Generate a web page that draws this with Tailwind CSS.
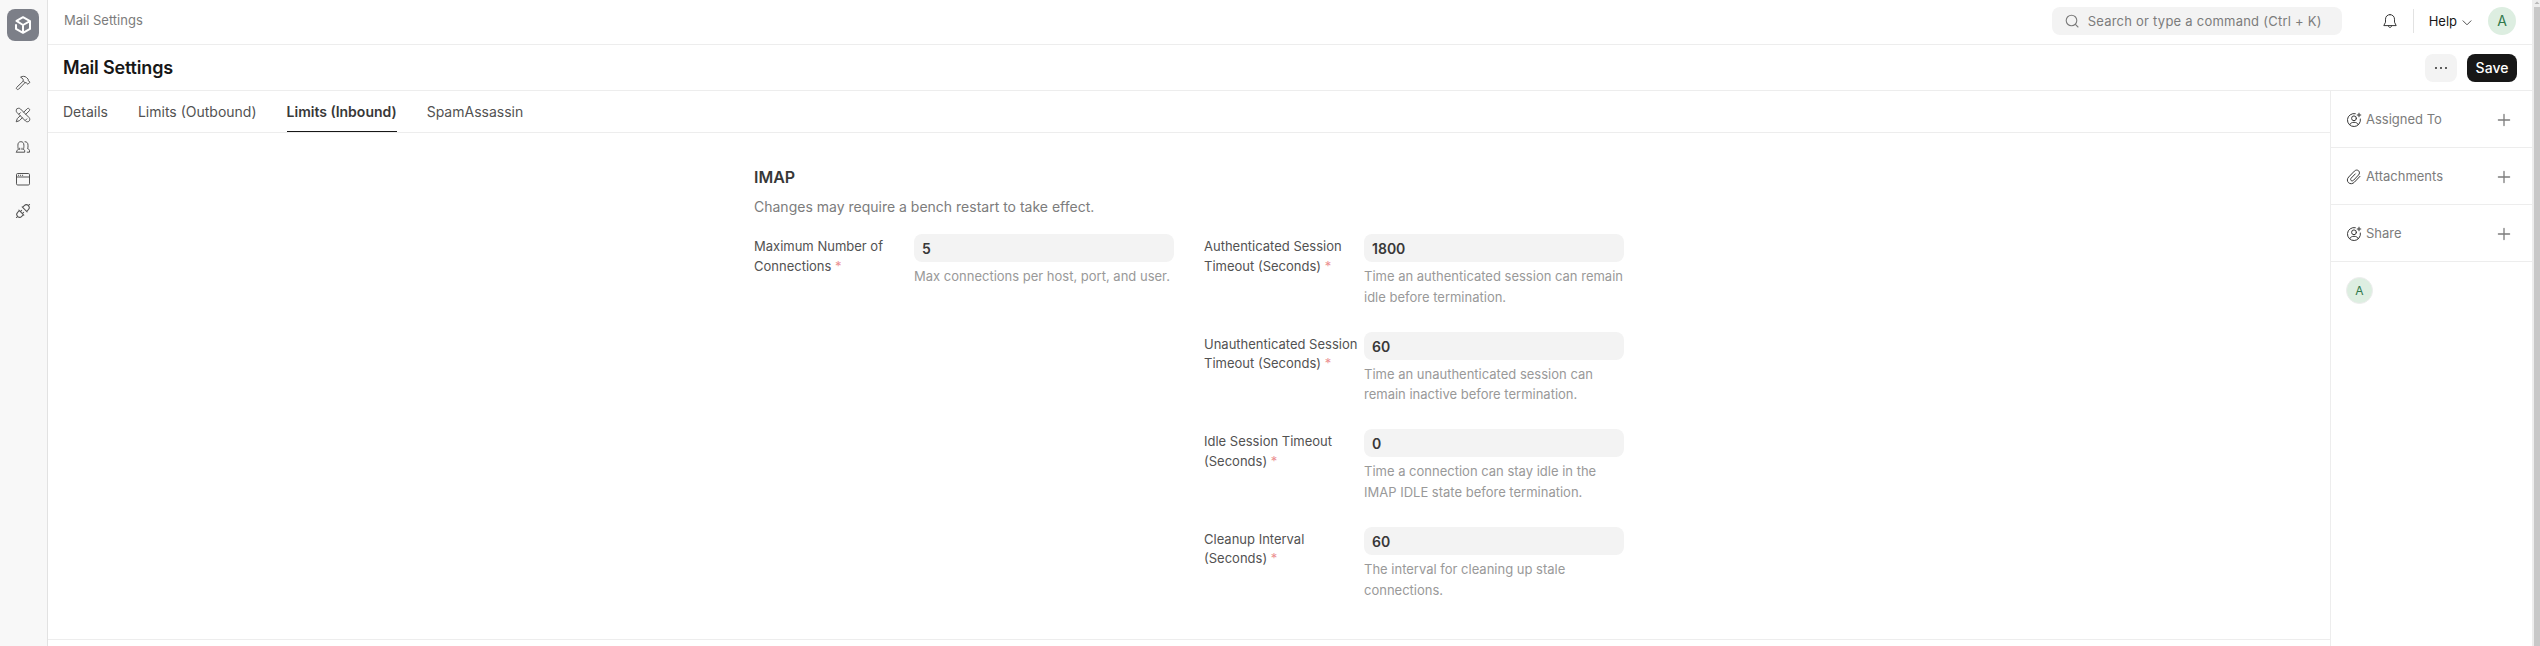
<!DOCTYPE html>
<html lang="en">
<head>
<meta charset="utf-8">
<title>Mail Settings</title>
<script src="https://cdn.jsdelivr.net/npm/@tailwindcss/browser@4"></script>
</head>
<body class="flex h-[646px] w-[2540px] overflow-hidden bg-white font-['Inter',sans-serif] text-[13px] leading-[19.5px] font-[420] text-[#525252]">
<svg class="hidden">
  <symbol id="assign" viewBox="0 0 16 16" fill="none" stroke="currentColor" stroke-linecap="round" stroke-linejoin="round">
    <path d="M9.3 1.65A6.5 6.5 0 1 0 14.4 7M3.6 12.7c.7-1.5 2.4-2.400 4.400-2.400s3.700.9 4.400 2.400M13 1.200v3.600M11.200 3h3.600"/>
    <circle cx="8" cy="6.3" r="2.4"/>
  </symbol>
  <symbol id="plus" viewBox="0 0 16 16" fill="none" stroke="currentColor" stroke-width="1.3" stroke-linecap="round"><path d="M8 2.400v11.200M2.400 8h11.200"/></symbol>
</svg>

<aside class="flex w-12 shrink-0 flex-col items-center border-r border-[#e2e2e2] bg-[#f8f8f8] pt-[9px] pr-px text-[#525252]">
  <div class="flex size-8 items-center justify-center rounded-lg bg-[#7c7f88] text-white">
    <svg class="size-5" viewBox="0 0 20 20" fill="none" stroke="currentColor" stroke-width="2" stroke-linejoin="round"><path d="M3 9.200V13.900l7 3.900 7-3.900V6.100L10 2.200 3.500 5.900l6.500 4.100 7-3.900M10 10v7.800"/></svg>
  </div>
  <nav class="mt-[34px] flex flex-col gap-4">
    <svg class="size-4" viewBox="0 0 16 16" fill="none" stroke="currentColor" stroke-linejoin="round"><path d="M5.600 2.200C7.500 1 9.800 1 11.500 2.500L13.200 4.200V5.600L15 7.200 12.900 9.300 11.200 7.700H10L8.100 5.800V4.300C7.600 3.300 6.700 2.700 5.600 2.200ZM8.300 6 1.800 12.300c-.6.600-.6 1.200 0 1.800s1.300.6 1.900 0L10 7.600"/></svg>
    <svg class="size-4" viewBox="0 0 16 16" fill="none" stroke="currentColor" stroke-linejoin="round" stroke-linecap="round"><path d="M1.900 1.900c.9-.9 2.600-.9 3.500 0l8.700 8.700c.9.900.9 2.600 0 3.500s-2.600.9-3.500 0L1.900 5.400c-.9-.9-.9-2.600 0-3.500ZM8.700 5.200 12.100 1.800c.6-.6 1.500-.6 2.100 0s.6 1.500 0 2.100L10.800 7.300M7.300 10.800 4.400 13.700 1.200 14.800 2.300 11.600 5.200 8.700M4 7.100 5.400 5.700M10.600 13.100l1.200-1.200"/></svg>
    <svg class="size-4" viewBox="0 0 16 16" fill="none" stroke="currentColor" stroke-linejoin="round" stroke-linecap="round"><path d="M1.500 13.200h8.200v-1.500c0-.8-.7-1.100-1.400-1.300.5-1 .6-2.300.6-4.200 0-2.200-1-3.500-3-3.500s-3 1.300-3 3.500c0 1.900.1 3.200.6 4.200-.7.200-1.500.5-1.500 1.300ZM4.700 9.200v1.300M7 9.200v1.300M10 2.700c2 0 3 1.300 3 3.500 0 1.500.1 2.500-.4 3.500.9.300 1.900.8 1.900 1.900v1.600h-2.300"/></svg>
    <svg class="size-4" viewBox="0 0 16 16" fill="none" stroke="currentColor" stroke-linejoin="round"><rect x="1.500" y="2.500" width="13" height="11.500" rx="1.200"/><path d="M1.500 6h13M3 4.300h1.100M5 4.300h1.100M7 4.300h1.100"/></svg>
    <svg class="size-4 overflow-visible" viewBox="0 0 16 16" fill="none" stroke="currentColor" stroke-linejoin="round" stroke-linecap="round"><path transform="rotate(45 8 8)" d="M8 -1.300V.4M4.500 5.700h7M5.100 5.700V3.300a2.900 2.900 0 0 1 5.800 0v2.400M4.500 10.300h7M5.100 10.300v2.400a2.900 2.900 0 0 0 5.800 0v-2.400M6.600 10.300V8.500M9.400 10.300V8.500M8 15.600v1.700"/></svg>
  </nav>
</aside>

<div class="flex min-w-0 flex-1 flex-col">
  <header class="flex h-[45px] shrink-0 items-center border-b border-[#ededed] pr-4 pl-4">
    <span class="-mt-[3px] text-[#7c7c7c]">Mail Settings</span>
    <div class="-mt-0.5 ml-auto flex h-7 w-[290px] items-center rounded-lg bg-[#f3f3f3] pl-3 text-[#7c7c7c]">
      <svg class="size-4" viewBox="0 0 16 16" fill="none" stroke="currentColor" stroke-width="1.1" stroke-linecap="round"><circle cx="7.500" cy="7.500" r="5.300"/><path d="m11.400 11.400 2.600 2.600"/></svg>
      <span class="mt-px ml-2 tracking-[0.018em]">Search or type a command (Ctrl + K)</span>
    </div>
    <svg class="-mt-0.5 ml-10 size-4 text-[#383838]" viewBox="0 0 16 16" fill="none" stroke="currentColor" stroke-linejoin="round" stroke-linecap="round"><path d="M8 1.600c-2.700 0-4.500 2-4.500 4.600v3L1.800 12.600h12.400L12.500 9.200v-3C12.500 3.600 10.700 1.600 8 1.600ZM6.400 12.800c0 1 .7 1.600 1.600 1.600s1.600-.6 1.600-1.600"/></svg>
    <div class="-mt-0.5 ml-[15px] h-6 w-px bg-[#e2e2e2]"></div>
    <span class="-mt-px ml-[15px] text-[#171717]">Help</span>
    <svg class="mt-px ml-1 size-3 text-[#525252]" viewBox="0 0 12 12" fill="none" stroke="currentColor" stroke-linecap="round" stroke-linejoin="round"><path d="m2 3.800 4 4 4-4"/></svg>
    <div class="-mt-0.5 ml-[15px] flex size-7 items-center justify-center rounded-full bg-[#ddeee1] text-sm text-[#30794c]">A</div>
  </header>

  <div class="flex h-[46px] shrink-0 items-center border-b border-[#ededed] pr-[15px] pl-[15px]">
    <h1 class="text-lg font-semibold tracking-[-0.01em] text-[#171717]">Mail Settings</h1>
    <button class="ml-auto flex h-7 w-8 items-center justify-center rounded-lg bg-[#f3f3f3] text-[#383838]">
      <svg class="size-4" viewBox="0 0 16 16" fill="currentColor"><circle cx="3" cy="8" r="1.050"/><circle cx="8" cy="8" r="1.050"/><circle cx="13" cy="8" r="1.050"/></svg>
    </button>
    <button class="ml-[10px] h-7 w-[50px] rounded-lg bg-[#171717] text-sm font-medium text-white">Save</button>
  </div>

  <div class="flex min-h-0 flex-1">
    <main class="flex flex-1 flex-col">
      <div class="flex h-[42px] shrink-0 gap-[30px] border-b border-[#ededed] pl-[15px] text-sm leading-[42px]">
        <span>Details</span>
        <span>Limits (Outbound)</span>
        <span class="h-[41px] border-b border-[#171717] font-semibold text-[#383838]">Limits (Inbound)</span>
        <span>SpamAssassin</span>
      </div>
      <section class="h-[507px] shrink-0 border-b border-[#ededed] pt-8 pl-[706px]">
        <h2 class="text-base leading-6 font-semibold text-[#383838]">IMAP</h2>
        <p class="mt-[7px] text-sm leading-[22px] text-[#7c7c7c]">Changes may require a bench restart to take effect.</p>
        <div class="mt-4 flex gap-[30px]">
          <div class="flex w-[420px]">
            <label class="w-40 shrink-0 pt-[3px]">Maximum Number of<br>Connections <span class="text-[#eb9091]">*</span></label>
            <div class="w-[260px]"><div class="flex h-7 items-center rounded-lg bg-[#f3f3f3] px-2 pt-0.5 text-sm font-semibold text-[#383838]">5</div><p class="mt-1 leading-[20.8px] font-normal whitespace-nowrap text-[#999]">Max connections per host, port, and user.</p></div>
          </div>
          <div class="flex w-[420px] flex-col gap-6">
            <div class="flex">
              <label class="w-40 shrink-0 pt-[3px]">Authenticated Session<br>Timeout (Seconds) <span class="text-[#eb9091]">*</span></label>
              <div class="w-[260px]"><div class="flex h-7 items-center rounded-lg bg-[#f3f3f3] px-2 pt-0.5 text-sm font-semibold text-[#383838]">1800</div><p class="mt-1 leading-[20.8px] font-normal whitespace-nowrap text-[#999]">Time an authenticated session can remain<br>idle before termination.</p></div>
            </div>
            <div class="flex">
              <label class="w-40 shrink-0 pt-[3px]">Unauthenticated Session<br>Timeout (Seconds) <span class="text-[#eb9091]">*</span></label>
              <div class="w-[260px]"><div class="flex h-7 items-center rounded-lg bg-[#f3f3f3] px-2 pt-0.5 text-sm font-semibold text-[#383838]">60</div><p class="mt-1 leading-[20.8px] font-normal whitespace-nowrap text-[#999]">Time an unauthenticated session can<br>remain inactive before termination.</p></div>
            </div>
            <div class="flex">
              <label class="w-40 shrink-0 pt-[3px]">Idle Session Timeout<br>(Seconds) <span class="text-[#eb9091]">*</span></label>
              <div class="w-[260px]"><div class="flex h-7 items-center rounded-lg bg-[#f3f3f3] px-2 pt-0.5 text-sm font-semibold text-[#383838]">0</div><p class="mt-1 leading-[20.8px] font-normal whitespace-nowrap text-[#999]">Time a connection can stay idle in the<br>IMAP IDLE state before termination.</p></div>
            </div>
            <div class="flex">
              <label class="w-40 shrink-0 pt-[3px]">Cleanup Interval<br>(Seconds) <span class="text-[#eb9091]">*</span></label>
              <div class="w-[260px]"><div class="flex h-7 items-center rounded-lg bg-[#f3f3f3] px-2 pt-0.5 text-sm font-semibold text-[#383838]">60</div><p class="mt-1 leading-[20.8px] font-normal whitespace-nowrap text-[#999]">The interval for cleaning up stale<br>connections.</p></div>
            </div>
          </div>
        </div>
      </section>
    </main>
    <aside class="w-[202px] shrink-0 border-l border-[#ededed] text-[#7c7c7c]">
      <div class="flex h-[57px] items-center border-b border-[#ededed] pt-px pr-5 pl-[15px]"><svg class="size-4 text-[#383838]"><use href="#assign"/></svg><span class="mt-px ml-1 flex-1">Assigned To</span><svg class="size-4"><use href="#plus"/></svg></div>
      <div class="flex h-[57px] items-center border-b border-[#ededed] pt-px pr-5 pl-[15px]"><svg class="size-4 text-[#383838]" viewBox="0 0 16 16" fill="none" stroke="currentColor" stroke-linecap="round"><path d="m14 7.300-5.600 5.900c-1.700 1.800-4.300 2-5.900.5S1 9.700 2.700 8l5.700-5.900c1.200-1.200 3-1.400 4.200-.3s1.100 3-.1 4.200L7.500 11.300c-.7.700-1.700.8-2.400.2s-.6-1.700.1-2.400L9.300 4.900"/></svg><span class="mt-px ml-1 flex-1">Attachments</span><svg class="size-4"><use href="#plus"/></svg></div>
      <div class="flex h-[57px] items-center border-b border-[#ededed] pt-px pr-5 pl-[15px]"><svg class="size-4 text-[#383838]"><use href="#assign"/></svg><span class="mt-px ml-1 flex-1">Share</span><svg class="size-4"><use href="#plus"/></svg></div>
      <div class="mt-[15px] ml-[15px] flex size-[27px] items-center justify-center rounded-full border border-[#ededed] bg-[#ddeee1] text-xs text-[#30794c]">A</div>
    </aside>
  </div>
</div>

<div class="flex w-2 shrink-0 flex-col items-end bg-[#ededed]">
  <svg class="h-[7px] w-1.5 shrink-0" viewBox="0 0 6 7" fill="#b8b8b8"><path d="M0.500 4 3 1.500 5.500 4Z"/></svg>
  <div class="w-1.5 flex-1 bg-[#c8c8c8]"></div>
</div>
</body>
</html>
